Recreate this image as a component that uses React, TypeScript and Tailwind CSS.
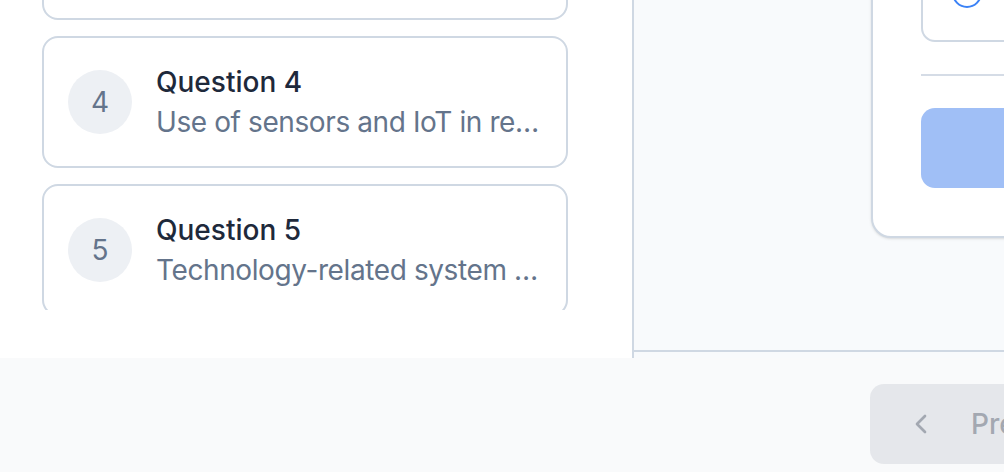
import React from "react";

const questions = [
  { n: 3, title: "Question 3", sub: "Overview of the question…" },
  { n: 4, title: "Question 4", sub: "Use of sensors and IoT in re…" },
  { n: 5, title: "Question 5", sub: "Technology-related system …" },
];

function QuestionCard({ n, title, sub }: { n: number; title: string; sub: string }) {
  return (
    <div className="flex items-center gap-6 rounded-[16px] border-2 border-[#cfd8e3] bg-white px-6 py-6">
      <div className="flex h-16 w-16 shrink-0 items-center justify-center rounded-full bg-[#edf0f4] text-[28px] leading-[40px] text-[#64748b]">
        {n}
      </div>
      <div className="min-w-0 flex-1">
        <div className="whitespace-nowrap text-[28px] font-medium leading-[40px] text-[#1e293b]">{title}</div>
        <div className="overflow-hidden whitespace-nowrap text-[28px] leading-[40px] tracking-[-0.4px] text-[#64748b]">{sub}</div>
      </div>
    </div>
  );
}

export default function App() {
  return (
    <div
      className="flex h-[472px] w-full flex-col overflow-hidden bg-[#f9fafb]"
      style={{ fontFamily: "Inter, 'Noto Sans', sans-serif" }}
    >
      <div className="flex h-[358px] shrink-0">
        {/* Left panel */}
        <div className="flex h-full w-[634px] shrink-0 flex-col border-r-2 border-[#cfd8e3] bg-white">
          <div className="h-[310px] overflow-hidden pl-[42px] pr-[64px]">
            <div className="mt-[-112px] flex flex-col gap-4">
              {questions.map((q) => (
                <QuestionCard key={q.n} {...q} />
              ))}
            </div>
          </div>
        </div>
        {/* Right panel */}
        <div className="flex min-w-0 flex-1 flex-col bg-[#f8fafc]">
          <div className="h-[352px] shrink-0 overflow-hidden border-b-2 border-[#cfd8e3] pl-[237px]">
            <div className="mt-[-106px] flex w-[640px] flex-col rounded-[20px] border-2 border-[#cfd8e3] bg-white p-12 shadow-sm">
              <div className="flex items-center gap-6 rounded-[14px] border-2 border-[#cfd8e3] px-[29px] py-[27px]">
                <div className="h-[30px] w-[30px] shrink-0 rounded-full border-2 border-[#3b82f6]" />
                <div className="whitespace-nowrap text-[28px] leading-[40px] text-[#1e293b]">Option</div>
              </div>
              <div className="my-8 h-[2px] bg-[#d5dce6]" />
              <div className="flex h-20 items-center justify-center rounded-[14px] bg-[#a0bff6] text-[28px] font-medium text-white">
                Submit
              </div>
            </div>
          </div>
        </div>
      </div>
      {/* Footer */}
      <div className="flex flex-1 bg-[#f9fafb] pt-[26px]">
        <div className="w-[870px] shrink-0" />
        <button className="flex h-20 shrink-0 items-center gap-[34px] rounded-[14px] bg-[#e5e7eb] pl-[35px] pr-10 text-[28px] font-medium text-[#a3a8b1]">
          <svg width="32" height="32" viewBox="0 0 24 24" fill="none" stroke="currentColor" strokeWidth="2" strokeLinecap="round" strokeLinejoin="round">
            <path d="m15 18-6-6 6-6" />
          </svg>
          <span>Previous</span>
        </button>
      </div>
    </div>
  );
}
